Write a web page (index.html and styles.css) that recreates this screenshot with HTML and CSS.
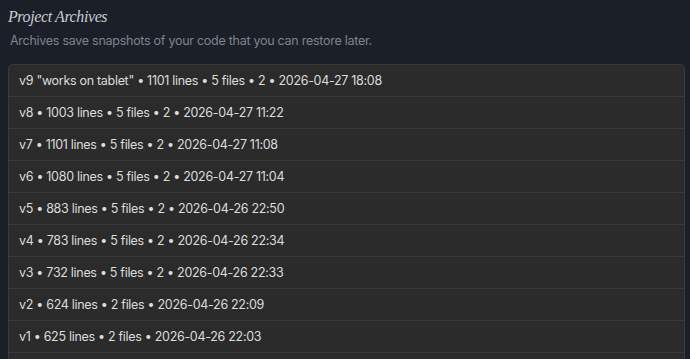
FILE: index.html
```html
<!DOCTYPE html>
<html lang="en">
<head>
    <meta charset="UTF-8">
    <meta name="viewport" content="width=device-width, initial-scale=1.0">
    <title>Project Archives</title>
    <link rel="stylesheet" href="styles.css">
</head>
<body>
    <div class="archives">
        <h2 class="archives-title">Project Archives</h2>
        <p class="archives-note">Archives save snapshots of your code that you can restore later.</p>
        <ul class="archive-list">
            <li class="archive-item">v9 "works on tablet" • 1101 lines • 5 files • 2 • 2026-04-27 18:08</li>
            <li class="archive-item">v8 • 1003 lines • 5 files • 2 • 2026-04-27 11:22</li>
            <li class="archive-item">v7 • 1101 lines • 5 files • 2 • 2026-04-27 11:08</li>
            <li class="archive-item">v6 • 1080 lines • 5 files • 2 • 2026-04-27 11:04</li>
            <li class="archive-item">v5 • 883 lines • 5 files • 2 • 2026-04-26 22:50</li>
            <li class="archive-item">v4 • 783 lines • 5 files • 2 • 2026-04-26 22:34</li>
            <li class="archive-item">v3 • 732 lines • 5 files • 2 • 2026-04-26 22:33</li>
            <li class="archive-item">v2 • 624 lines • 2 files • 2026-04-26 22:09</li>
            <li class="archive-item">v1 • 625 lines • 2 files • 2026-04-26 22:03</li>
            <li class="archive-item"></li>
        </ul>
    </div>
</body>
</html>
```

FILE: styles.css
```css
* {
    margin: 0;
    padding: 0;
    box-sizing: border-box;
}

html, body {
    height: 100%;
    overflow: hidden;
}

body {
    background: #1a1f28;
    font-family: Inter, "Noto Sans", sans-serif;
}

.archives {
    padding: 6px 5px 0 8px;
}

.archives-title {
    font-family: "Liberation Serif", serif;
    font-style: italic;
    font-weight: normal;
    font-size: 16px;
    letter-spacing: -0.4px;
    line-height: 22px;
    color: #c9ccd1;
}

.archives-note {
    margin: 5px 0 0 2px;
    font-size: 12.5px;
    letter-spacing: -0.27px;
    line-height: 16px;
    color: #7f848c;
}

.archive-list {
    list-style: none;
    margin-top: 15px;
    background: #2b2b2b;
    border: 1px solid #3b3b3b;
    border-radius: 5px;
}

.archive-item {
    height: 32px;
    padding: 0 10px;
    display: flex;
    align-items: center;
    font-size: 12.5px;
    letter-spacing: -0.3px;
    color: #dcdcdc;
    border-top: 1px solid #3b3b3b;
}

.archive-item:first-child {
    border-top: none;
    height: 31px;
}
```
